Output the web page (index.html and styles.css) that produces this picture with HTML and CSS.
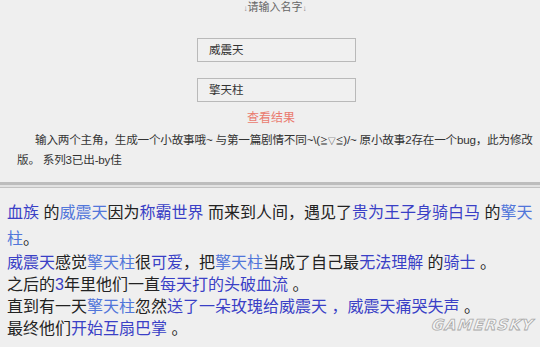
FILE: index.html
```html
<!DOCTYPE html>
<html lang="zh">
<head>
<meta charset="utf-8">
<link rel="stylesheet" href="styles.css">
</head>
<body>
<div class="top">
  <div class="title"><span class="arr">↓</span>请输入名字<span class="arr">↓</span></div>
  <div class="fields">
    <div class="field">威震天</div>
    <div class="field">擎天柱</div>
  </div>
  <div class="result">查看结果</div>
  <p class="desc">输入两个主角，生成一个小故事哦~ 与第一篇剧情不同~\(<span class="sym">≧▽≦</span>)/~ 原小故事2存在一个bug，此为修改版。 系列3已出-by佳</p>
</div>
<div class="sep"></div>
<div class="story">
  <p class="first"><span class="b">血族</span> 的<span class="n">威震天</span>因为<span class="b">称霸世界</span> 而来到人间，遇见了<span class="b">贵为王子身骑白马</span> 的<span class="n">擎天柱</span>。</p>
  <p><span class="b">威震天</span>感觉<span class="n">擎天柱</span>很<span class="b">可爱</span>，把<span class="n">擎天柱</span>当成了自己最<span class="b">无法理解</span> 的<span class="b">骑士</span> 。</p>
  <p>之后的<span class="b">3</span>年里他们一直<span class="b">每天打的头破血流</span> 。</p>
  <p>直到有一天<span class="n">擎天柱</span>忽然<span class="b">送了一朵玫瑰给威震天 ，威震天痛哭失声</span> 。</p>
  <p>最终他们<span class="b">开始互扇巴掌</span> 。</p>
</div>
<div class="mark">GAMERSKY</div>
</body>
</html>
```
FILE: styles.css
```css
html, body {
  margin: 0;
  padding: 0;
  background: #efefef;
  width: 540px;
  height: 347px;
  overflow: hidden;
  position: relative;
  font-family: "Liberation Sans", "Noto Sans CJK SC", sans-serif;
}
.top {
  padding-bottom: 13px;
}
.title {
  font-size: 11px;
  line-height: 14px;
  height: 14px;
  color: #666;
  text-align: center;
  padding-left: 10px;
}
.arr {
  font-size: 8px;
  color: #888;
}
.fields {
  display: flex;
  flex-direction: column;
  gap: 16px;
  margin-top: 24px;
  margin-left: 197px;
}
.field {
  box-sizing: border-box;
  width: 159px;
  height: 24px;
  border: 1px solid #b9b9b9;
  background: #f0f0f0;
  font-size: 11.5px;
  line-height: 22px;
  padding-left: 11px;
  color: #333;
}
.result {
  margin-top: 8px;
  font-size: 12px;
  line-height: 16px;
  color: #ea7b6f;
  text-align: center;
  padding-left: 2px;
}
.desc {
  margin: 5px 3px 0 17px;
  font-size: 11.6px;
  line-height: 18px;
  text-indent: 18px;
  color: #333;
  letter-spacing: -0.2px;
}
.sym {
  font-size: 8px;
}
.sep {
  height: 2px;
  border-top: 3px solid #bdbdbd;
  border-bottom: 1px solid #c2c2c2;
  background: #e2e2e2;
}
.story {
  padding: 12px 0 0 7px;
  font-size: 16px;
  color: #222;
}
.story p {
  margin: 0;
  line-height: 22px;
}
.story p.first {
  line-height: 26px;
}
.b {
  color: #3a3fc6;
}
.n {
  color: #5176da;
}
.mark {
  position: absolute;
  right: 6px;
  bottom: 13px;
  font-family: "DejaVu Sans", sans-serif;
  font-weight: bold;
  font-style: italic;
  font-size: 15px;
  letter-spacing: 1px;
  color: #f6f6f6;
  -webkit-text-stroke: 0.8px #a8a8a8;
  transform: skewX(-8deg);
}
```
